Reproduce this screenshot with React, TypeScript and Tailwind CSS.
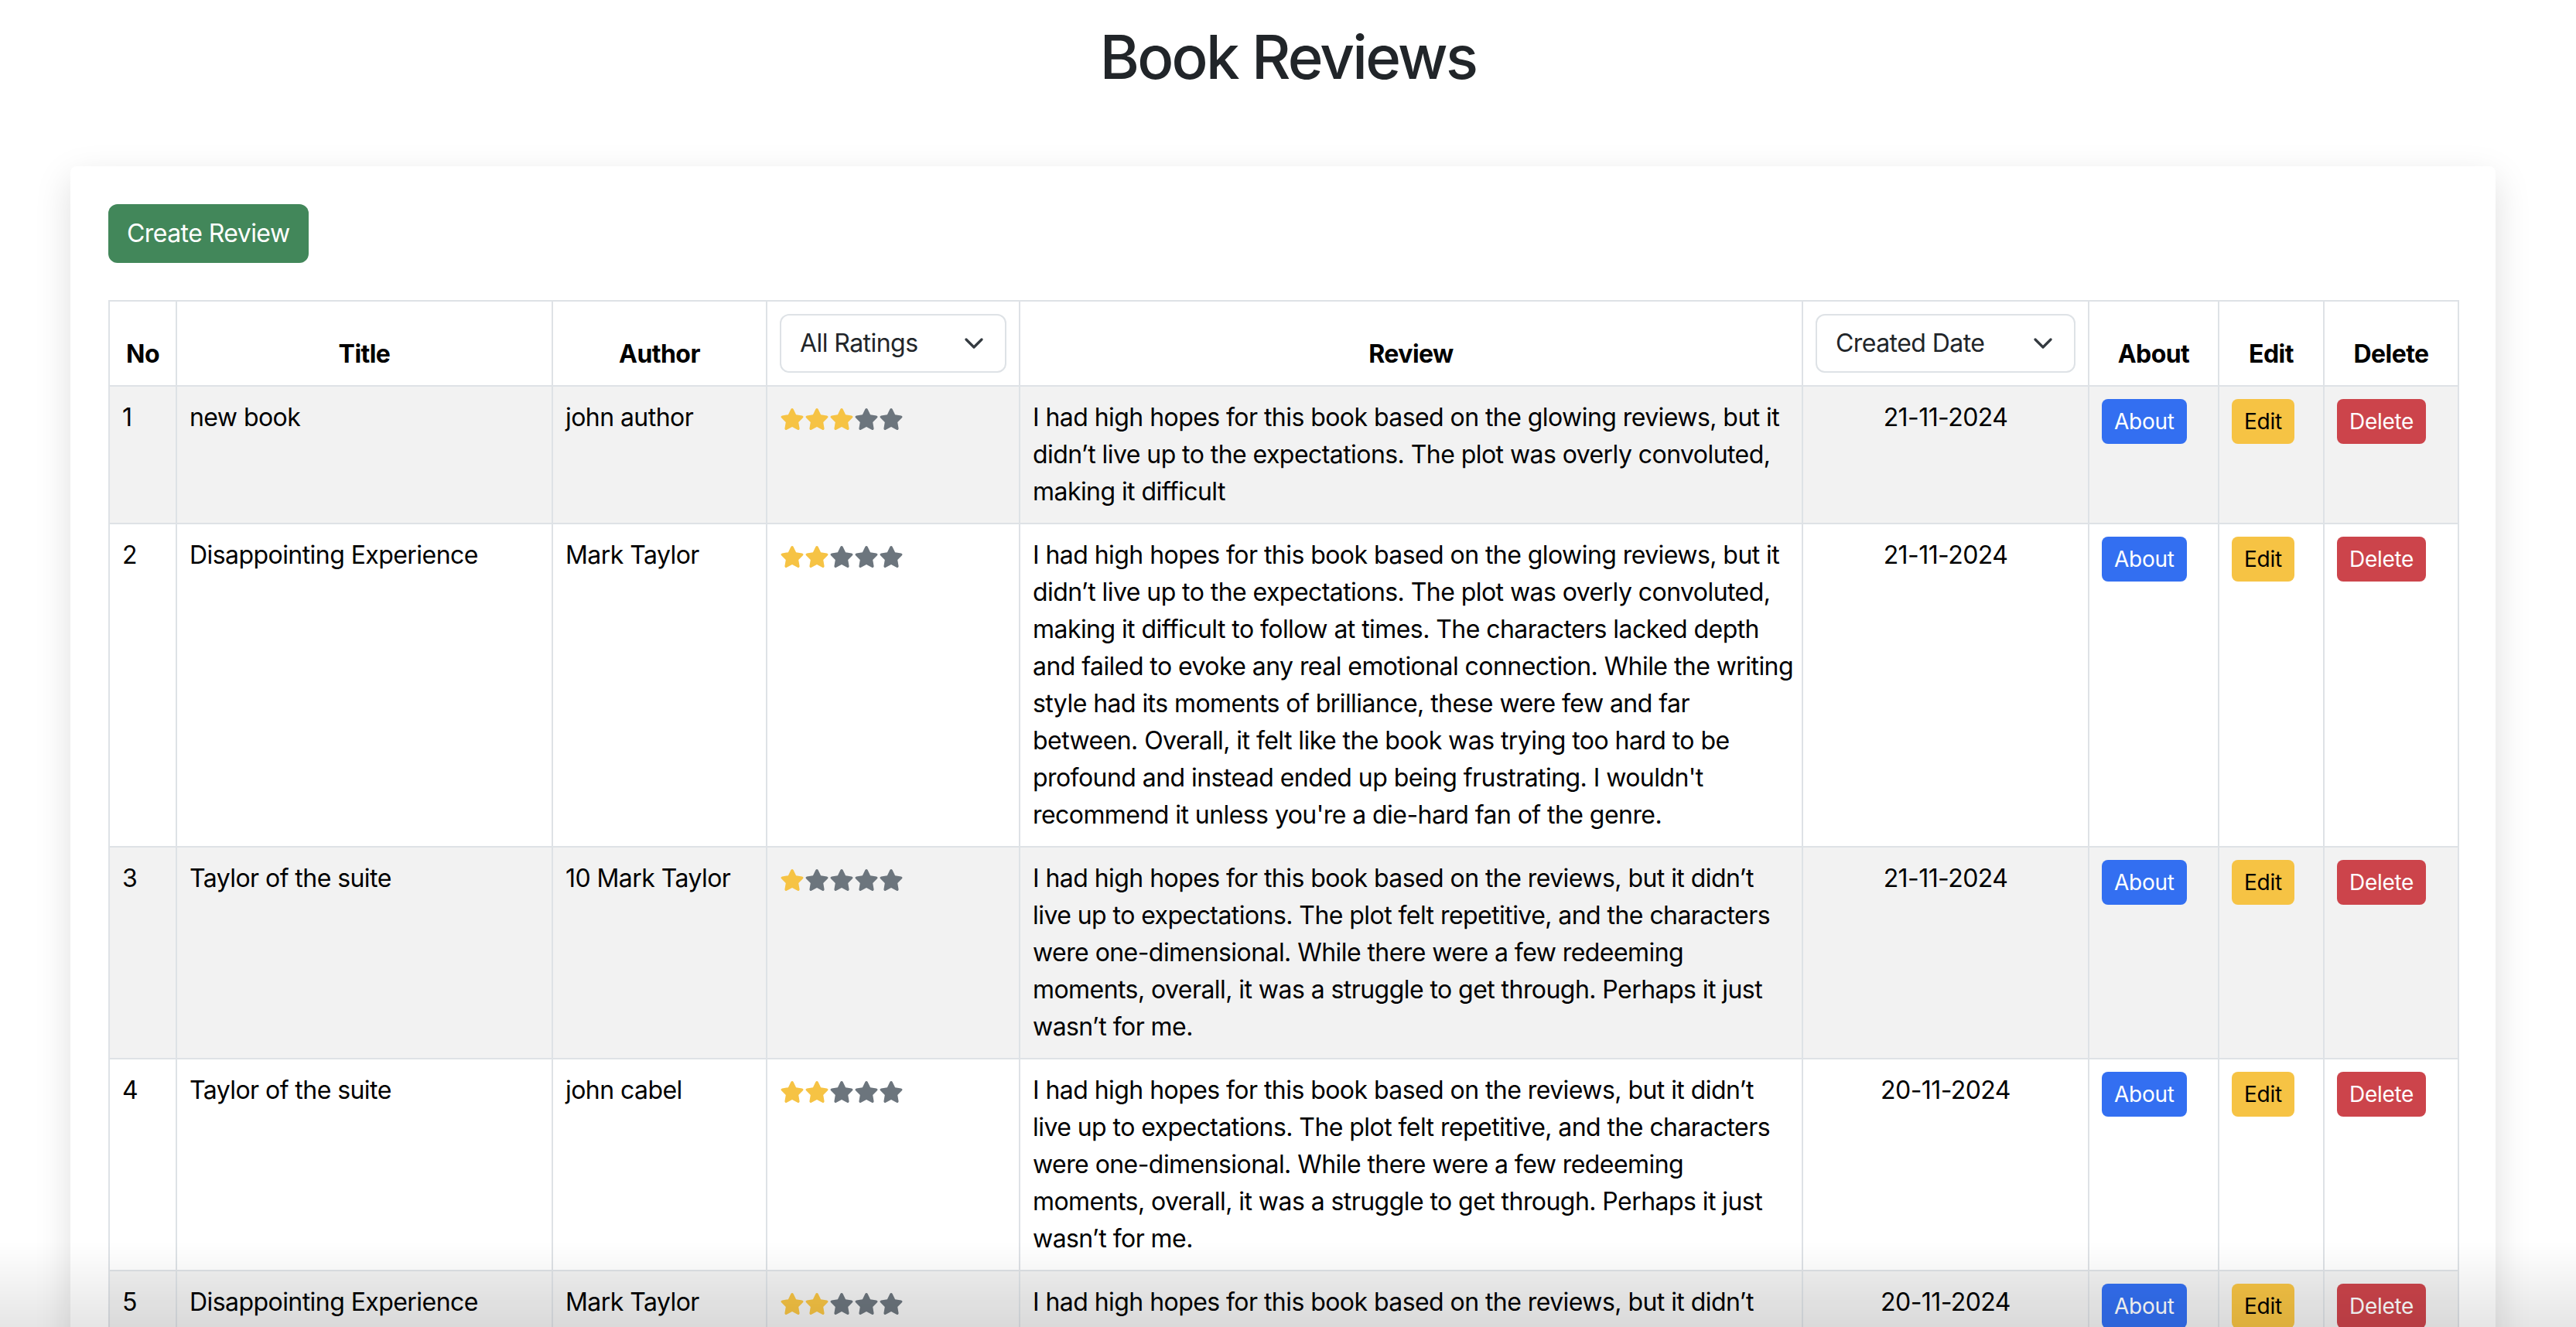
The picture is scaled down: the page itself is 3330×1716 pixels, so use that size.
import React from "react";

type Review = {
  no: number;
  title: string;
  author: string;
  rating: number;
  lines: string[];
  date: string;
};

const longReview = [
  "I had high hopes for this book based on the glowing reviews, but it",
  "didn’t live up to the expectations. The plot was overly convoluted,",
  "making it difficult to follow at times. The characters lacked depth",
  "and failed to evoke any real emotional connection. While the writing",
  "style had its moments of brilliance, these were few and far",
  "between. Overall, it felt like the book was trying too hard to be",
  "profound and instead ended up being frustrating. I wouldn't",
  "recommend it unless you're a die-hard fan of the genre.",
];

const shortReview = [
  "I had high hopes for this book based on the reviews, but it didn’t",
  "live up to expectations. The plot felt repetitive, and the characters",
  "were one-dimensional. While there were a few redeeming",
  "moments, overall, it was a struggle to get through. Perhaps it just",
  "wasn’t for me.",
];

const reviews: Review[] = [
  {
    no: 1,
    title: "new book",
    author: "john author",
    rating: 3,
    lines: [longReview[0], longReview[1], "making it difficult"],
    date: "21-11-2024",
  },
  { no: 2, title: "Disappointing Experience", author: "Mark Taylor", rating: 2, lines: longReview, date: "21-11-2024" },
  { no: 3, title: "Taylor of the suite", author: "10 Mark Taylor", rating: 1, lines: shortReview, date: "21-11-2024" },
  { no: 4, title: "Taylor of the suite", author: "john cabel", rating: 2, lines: shortReview, date: "20-11-2024" },
  { no: 5, title: "Disappointing Experience", author: "Mark Taylor", rating: 2, lines: shortReview, date: "20-11-2024" },
];

const Star = ({ filled }: { filled: boolean }) => (
  <svg width="32" height="28" viewBox="0 0 576 512" className={filled ? "fill-[#f6c344]" : "fill-[#6c757d]"}>
    <path d="M316.9 18C311.6 7 300.4 0 288.1 0s-23.4 7-28.8 18L195 150.3 51.4 171.5c-12 1.8-22 10.2-25.7 21.7s-.7 24.2 7.9 32.7L137.8 329 113.2 474.7c-2 12 3 24.2 12.9 31.3s23 8 33.8 2.3l128.3-68.5 128.3 68.5c10.8 5.7 23.9 4.9 33.8-2.3s14.9-19.3 12.9-31.3L438.5 329 542.7 225.9c8.6-8.5 11.7-21.2 7.9-32.7s-13.7-19.9-25.7-21.7L381.2 150.3 316.9 18z" />
  </svg>
);

// bootstrap-ish select chevron
const Chevron = () => (
  <svg width="24" height="14" viewBox="0 0 24 14" fill="none">
    <path d="M2 2l10 10 10-10" stroke="#343a40" strokeWidth="3.2" strokeLinecap="round" strokeLinejoin="round" />
  </svg>
);

const FakeSelect = ({ label }: { label: string }) => (
  <div className="flex h-[76px] w-full items-center justify-between rounded-[12px] border-2 border-[#dee2e6] bg-white pl-[24px] pr-[28px] text-left text-[32px] font-normal text-[#212529]">
    <span>{label}</span>
    <Chevron />
  </div>
);

const th = "border-2 border-[#dee2e6] p-[16px] text-center align-bottom font-bold";
const td = "border-2 border-[#dee2e6] p-[16px] align-top";

export default function App() {
  return (
    <div className="relative min-h-screen bg-white pb-[80px] font-['Inter',sans-serif] tracking-[-0.035em] text-[#212529]">
      <h1 className="pt-[26px] text-center text-[78px] font-medium leading-[96px] tracking-[-0.035em]">Book Reviews</h1>

      <div className="ml-[91px] mt-[93px] w-[3135px] rounded-[8px] bg-white p-[49px] shadow-[0_16px_48px_rgba(0,0,0,0.13)]">
        <button className="h-[76px] rounded-[12px] bg-[#42875a] px-[24px] text-[32px] leading-[48px] text-white">
          Create Review
        </button>

        <table className="mt-[48px] w-[3037px] table-fixed border-collapse text-[32px] leading-[48px] text-black">
          <colgroup>
            <col className="w-[87px]" />
            <col className="w-[486px]" />
            <col className="w-[277px]" />
            <col className="w-[327px]" />
            <col className="w-[1012px]" />
            <col className="w-[370px]" />
            <col className="w-[168px]" />
            <col className="w-[136px]" />
            <col className="w-[174px]" />
          </colgroup>
          <thead>
            <tr>
              <th className={th}>No</th>
              <th className={th}>Title</th>
              <th className={th}>Author</th>
              <th className="border-2 border-[#dee2e6] p-[16px] align-bottom">
                <FakeSelect label="All Ratings" />
              </th>
              <th className={th}>Review</th>
              <th className="border-2 border-[#dee2e6] p-[16px] align-bottom">
                <FakeSelect label="Created Date" />
              </th>
              <th className={th}>About</th>
              <th className={th}>Edit</th>
              <th className={th}>Delete</th>
            </tr>
          </thead>
          <tbody>
            {reviews.map((r, i) => (
              <tr key={r.no} className={i % 2 === 0 ? "bg-[#f2f2f2]" : "bg-white"}>
                <td className={td}>{r.no}</td>
                <td className={td}>{r.title}</td>
                <td className={td}>{r.author}</td>
                <td className={td}>
                  <div className="flex h-[48px] items-center pt-[4px]">
                    {[0, 1, 2, 3, 4].map((s) => (
                      <Star key={s} filled={s < r.rating} />
                    ))}
                  </div>
                </td>
                <td className={td}>
                  {r.lines.map((line, k) => (
                    <div key={k} className="whitespace-nowrap">
                      {line}
                    </div>
                  ))}
                </td>
                <td className={td + " text-center"}>{r.date}</td>
                <td className={td}>
                  <button className="rounded-[8px] bg-[#336ff1] px-[16px] py-[8px] text-[28px] leading-[42px] tracking-[-0.01em] text-white">
                    About
                  </button>
                </td>
                <td className={td}>
                  <button className="rounded-[8px] bg-[#f6c344] px-[16px] py-[8px] text-[28px] leading-[42px] tracking-[-0.01em] text-black">
                    Edit
                  </button>
                </td>
                <td className={td}>
                  <button className="rounded-[8px] bg-[#cc444b] px-[16px] py-[8px] text-[28px] leading-[42px] tracking-[-0.01em] text-white">
                    Delete
                  </button>
                </td>
              </tr>
            ))}
          </tbody>
        </table>
      </div>

      <div className="pointer-events-none fixed bottom-0 left-0 right-0 h-[110px] bg-linear-to-b from-transparent to-black/10" />
    </div>
  );
}
